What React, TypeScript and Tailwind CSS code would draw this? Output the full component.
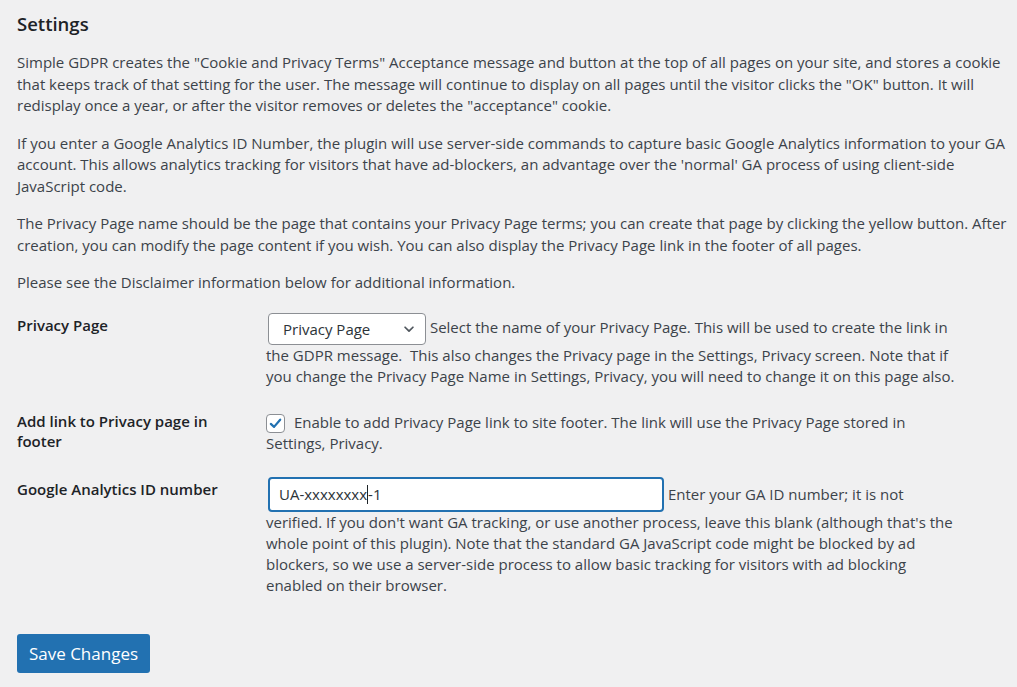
import React from "react";

const font = { fontFamily: '"Open Sans", "Noto Sans", sans-serif' };

function Lines({ lines }: { lines: string[] }) {
  return (
    <>
      {lines.map((l, i) => (
        <React.Fragment key={i}>
          <br />
          {l}
        </React.Fragment>
      ))}
    </>
  );
}

export default function App() {
  return (
    <div className="min-h-[687px] w-[1017px] bg-[#f0f0f1] text-[#3c434a] text-[15px] leading-[21.5px] pl-[17px] pt-[12px] whitespace-nowrap" style={font}>
      <h2 className="text-[18.5px] font-semibold text-[#1d2327] leading-[24px] mb-[16px]">Settings</h2>
      <p className="mb-[16px]">
        Simple GDPR creates the "Cookie and Privacy Terms" Acceptance message and button at the top of all pages on your site, and stores a cookie
        <Lines lines={[
          'that keeps track of that setting for the user. The message will continue to display on all pages until the visitor clicks the "OK" button. It will',
          'redisplay once a year, or after the visitor removes or deletes the "acceptance" cookie.',
        ]} />
      </p>
      <p className="mb-[16px]">
        If you enter a Google Analytics ID Number, the plugin will use server-side commands to capture basic Google Analytics information to your GA
        <Lines lines={[
          "account. This allows analytics tracking for visitors that have ad-blockers, an advantage over the 'normal' GA process of using client-side",
          'JavaScript code.',
        ]} />
      </p>
      <p className="mb-[16px]">
        The Privacy Page name should be the page that contains your Privacy Page terms; you can create that page by clicking the yellow button. After
        <Lines lines={[
          'creation, you can modify the page content if you wish. You can also display the Privacy Page link in the footer of all pages.',
        ]} />
      </p>
      <p>Please see the Disclaimer information below for additional information.</p>

      <div className="flex items-start mt-[19px]">
        <div className="w-[249px] shrink-0 font-semibold text-[#1d2327] leading-[20px] pt-[2px]">Privacy Page</div>
        <div className="leading-[21px]">
          <span className="inline-flex align-middle ml-[2px] w-[158px] h-[32px] border border-[#8c8f94] rounded-[4px] bg-white items-center justify-between pl-[14px] pr-[9px] text-[#2c3338] leading-[20px]">
            <span>Privacy Page</span>
            <svg width="14" height="14" viewBox="0 0 16 16" fill="none" stroke="#50575e" strokeWidth="2" strokeLinecap="round" strokeLinejoin="round"><path d="M3.5 6 L8 10.5 L12.5 6" /></svg>
          </span>{" "}
          Select the name of your Privacy Page. This will be used to create the link in
          <Lines lines={[
            'the GDPR message.\u00a0 This also changes the Privacy page in the Settings, Privacy screen. Note that if',
            'you change the Privacy Page Name in Settings, Privacy, you will need to change it on this page also.',
          ]} />
        </div>
      </div>

      <div className="flex items-start mt-[24px]">
        <div className="w-[249px] shrink-0 font-semibold text-[#1d2327] leading-[20px]">
          Add link to Privacy page in<br />footer
        </div>
        <div className="leading-[21px] pt-[1px]">
          <span className="inline-flex align-middle w-[19px] h-[19px] mr-[5px] border border-[#8c8f94] rounded-[4px] bg-white items-center justify-center">
            <svg width="17" height="17" viewBox="0 0 20 20"><path d="M4.5 10.5 L8.3 14 L15.5 5.5" fill="none" stroke="#2271b1" strokeWidth="2.6" strokeLinecap="round" strokeLinejoin="round" /></svg>
          </span>{" "}
          Enable to add Privacy Page link to site footer. The link will use the Privacy Page stored in
          <Lines lines={['Settings, Privacy.']} />
        </div>
      </div>

      <div className="flex items-start mt-[23px]">
        <div className="w-[249px] shrink-0 font-semibold text-[#1d2327] leading-[20px] pt-[2px]">Google Analytics ID number</div>
        <div className="leading-[21px]">
          <span className="inline-flex ml-[2px] w-[396px] h-[35px] border-2 border-[#2271b1] rounded-[4px] bg-white items-center pl-[9px] text-[#2c3338]">
            <span>UA-xxxxxxxx</span>
            <span className="inline-block w-px h-[19px] bg-[#1d2327]" />
            <span>-1</span>
          </span>{" "}
          Enter your GA ID number; it is not
          <Lines lines={[
            "verified. If you don't want GA tracking, or use another process, leave this blank (although that's the",
            'whole point of this plugin). Note that the standard GA JavaScript code might be blocked by ad',
            'blockers, so we use a server-side process to allow basic tracking for visitors with ad blocking',
            'enabled on their browser.',
          ]} />
        </div>
      </div>

      <button className="mt-[38px] h-[39px] w-[133px] rounded-[3px] bg-[#2271b1] text-white text-[17px] flex items-center justify-center" style={font}>
        Save Changes
      </button>
    </div>
  );
}
